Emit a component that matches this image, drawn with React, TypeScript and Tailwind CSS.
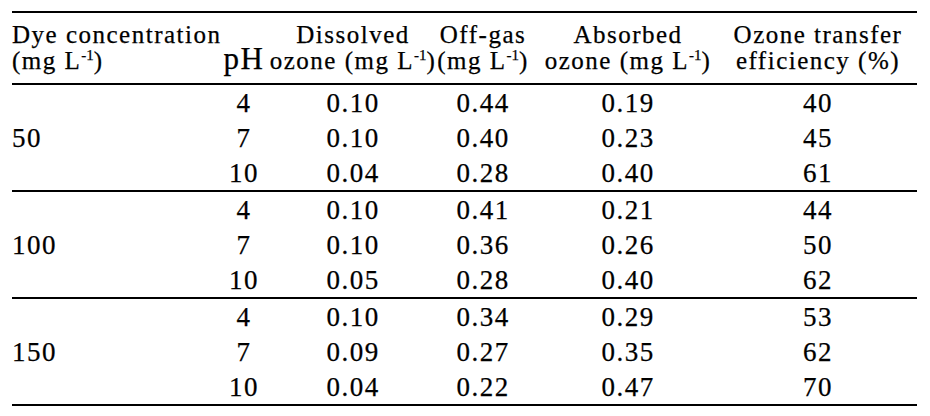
import React from "react";

const groups = [
  {
    dye: "50",
    rows: [
      ["4", "0.10", "0.44", "0.19", "40"],
      ["7", "0.10", "0.40", "0.23", "45"],
      ["10", "0.04", "0.28", "0.40", "61"],
    ],
  },
  {
    dye: "100",
    rows: [
      ["4", "0.10", "0.41", "0.21", "44"],
      ["7", "0.10", "0.36", "0.26", "50"],
      ["10", "0.05", "0.28", "0.40", "62"],
    ],
  },
  {
    dye: "150",
    rows: [
      ["4", "0.10", "0.34", "0.29", "53"],
      ["7", "0.09", "0.27", "0.35", "62"],
      ["10", "0.04", "0.22", "0.47", "70"],
    ],
  },
];

const cols = "grid grid-cols-[210px_44px_174px_86px_204px_176px]";

function Unit() {
  return (
    <>
      (mg L<span className="relative -top-[9px] text-[15px] leading-[0] tracking-normal">-1</span>)
    </>
  );
}

function HeadCell({ children }: { children: React.ReactNode }) {
  return (
    <div className="flex flex-col items-center whitespace-nowrap">{children}</div>
  );
}

export default function App() {
  return (
    <div className="w-[930px] h-[416px] bg-white text-black [font-family:'Liberation_Serif','Times_New_Roman',serif] [-webkit-text-stroke:0.25px_black] pt-[11px] pl-[12px]">
      <div className="w-[905px] border-t-2 border-black">
        {/* header */}
        <div className={`${cols} h-[72px] border-b-2 border-black pt-[9px] text-[25px] leading-[26px] tracking-[1.5px]`}>
          <div className="flex flex-col items-start whitespace-nowrap">
            <span>Dye concentration</span>
            <span>
              <Unit />
            </span>
          </div>
          <div className="flex items-center justify-center pt-[12px] text-[31px] leading-[31px] tracking-[1.5px] whitespace-nowrap">
            pH
          </div>
          <HeadCell>
            <span>Dissolved</span>
            <span>
              ozone <Unit />
            </span>
          </HeadCell>
          <HeadCell>
            <span>Off-gas</span>
            <span>
              <Unit />
            </span>
          </HeadCell>
          <HeadCell>
            <span>Absorbed</span>
            <span>
              ozone <Unit />
            </span>
          </HeadCell>
          <HeadCell>
            <span>Ozone transfer</span>
            <span>efficiency (%)</span>
          </HeadCell>
        </div>
        {/* body */}
        {groups.map((g) => (
          <div
            key={g.dye}
            className={`${cols} grid-rows-[35px_35px_35px] border-b-2 border-black text-[27px] tracking-[1.5px]`}
          >
            <div className="row-span-3 flex items-center pt-[2px] leading-[33px]">{g.dye}</div>
            {g.rows.map((r, i) =>
              r.map((v, j) => (
                <div
                  key={`${i}-${j}`}
                  className="flex justify-center pt-[2px] leading-[33px] whitespace-nowrap"
                  style={{ gridRow: i + 1, gridColumn: j + 2 }}
                >
                  {v}
                </div>
              ))
            )}
          </div>
        ))}
      </div>
    </div>
  );
}
